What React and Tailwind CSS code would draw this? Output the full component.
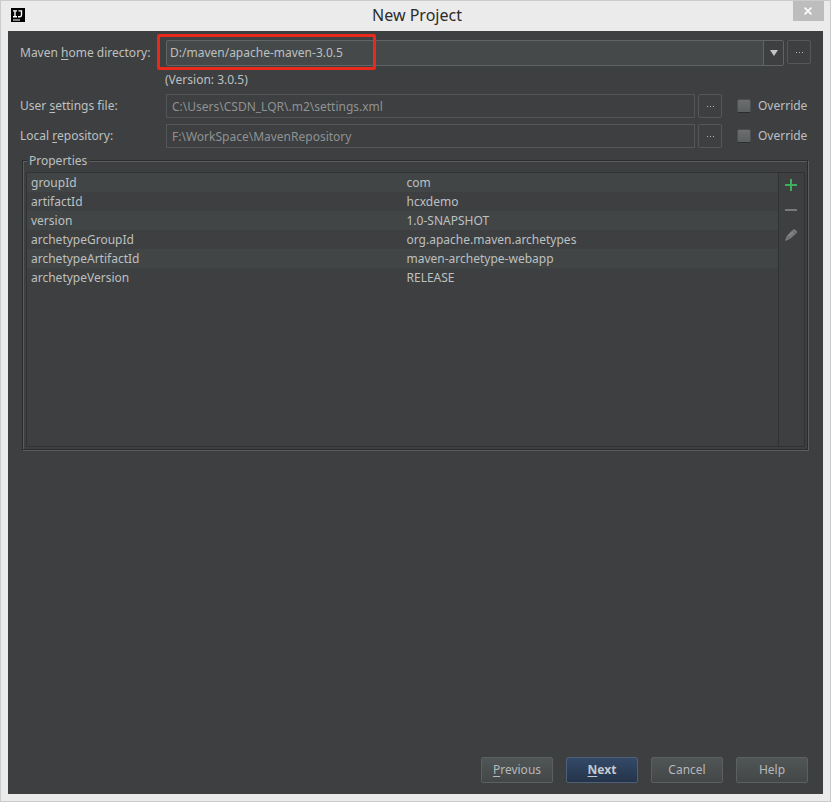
import React, { useState } from "react";

const properties = [
  { name: "groupId", value: "com" },
  { name: "artifactId", value: "hcxdemo" },
  { name: "version", value: "1.0-SNAPSHOT" },
  { name: "archetypeGroupId", value: "org.apache.maven.archetypes" },
  { name: "archetypeArtifactId", value: "maven-archetype-webapp" },
  { name: "archetypeVersion", value: "RELEASE" },
];

function Mnemonic({ children }) {
  return <span className="underline underline-offset-2">{children}</span>;
}

function BrowseButton({ label }) {
  return (
    <button
      aria-label={label}
      className="flex h-6 w-6 shrink-0 items-center justify-center rounded-xs border border-[#555758] bg-[#3d3f40]"
    >
      <svg width="7" height="1" viewBox="0 0 7 1" fill="#b4b7b8" shapeRendering="crispEdges">
        <rect x="0" y="0" width="1" height="1" />
        <rect x="3" y="0" width="1" height="1" />
        <rect x="6" y="0" width="1" height="1" />
      </svg>
    </button>
  );
}

function PathRow({ id, label, value }) {
  const [override, setOverride] = useState(false);

  return (
    <div className="flex h-6 items-center">
      <label htmlFor={id} className="w-[146px] shrink-0">{label}</label>
      <input
        id={id}
        type="text"
        readOnly
        value={value}
        className="h-6 min-w-0 flex-1 border border-[#535556] bg-[#3d3f40] px-[5px] text-[#8f9293] outline-none"
      />
      <div className="ml-[3px] flex">
        <BrowseButton label="Browse" />
      </div>
      <label className="ml-[15px] flex w-[74px] shrink-0 items-center gap-[7px]">
        <input
          type="checkbox"
          checked={override}
          onChange={(e) => setOverride(e.target.checked)}
          className="h-[14px] w-[14px] shrink-0 appearance-none rounded-xs border border-[#4c4f50] border-b-[#2c2e2f] bg-linear-to-b from-[#6c6e6f] to-[#5c5f60] checked:bg-[#9a9d9e]"
        />
        Override
      </label>
    </div>
  );
}

function DialogButton({ primary, children }) {
  return (
    <button
      className={
        primary
          ? "h-[26px] w-[72px] rounded-xs border border-[#4d6078] bg-linear-to-b from-[#344a68] to-[#24344a] font-bold text-[#c5cacf]"
          : "h-[26px] w-[72px] rounded-xs border border-[#5c6061] bg-linear-to-b from-[#505556] to-[#434748] text-[#b6b9ba]"
      }
    >
      {children}
    </button>
  );
}

function TitleBar() {
  return (
    <header className="flex h-[30px] items-start justify-between pl-[10px] pr-[6px]">
      <svg className="mt-[7px]" width="14" height="14" viewBox="0 0 14 14" aria-hidden="true">
        <rect width="14" height="14" fill="#000" />
        <g stroke="#fff" strokeWidth="1.4" fill="none">
          <path d="M2 2.9h4M4 2.9v5.4M2 8.7h4" />
          <path d="M7.5 2.9h3v4.2q0 1.6-1.6 1.6H7" />
        </g>
        <rect x="2" y="11.5" width="7" height="1" fill="#fff" />
      </svg>
      <h1 className="text-base leading-7 text-[#2b2b2b]">New Project</h1>
      <button aria-label="Close" className="-ml-4 flex h-5 w-[31px] items-center justify-center bg-[#bdbdbd]">
        <svg width="8" height="8" viewBox="0 0 8 8" stroke="#fff" strokeWidth="1.7">
          <path d="M0.6 0.6l6.8 6.8M7.4 0.6L0.6 7.4" />
        </svg>
      </button>
    </header>
  );
}

function PropertiesPanel() {
  return (
    <section className="relative ml-[2px] mr-[3px] mt-3 border border-[#2a2c2d] shadow-[inset_1px_1px_0_#5b5d5e,1px_1px_0_#5b5d5e]">
      <h2 className="absolute -top-2 left-1 bg-[#3d3f40] px-[2px] leading-4">Properties</h2>
      <div className="mb-[2px] ml-[3px] mr-[2px] mt-[11px] flex h-[275px] border border-[#303233]">
        <div className="flex-1">
          <table className="w-full table-fixed border-collapse text-left">
            <tbody>
              {properties.map((p) => (
                <tr key={p.name} className="h-[19px] odd:bg-[#414545]">
                  <td className="p-0 pl-1 leading-[19px]">{p.name}</td>
                  <td className="p-0 pl-1 leading-[19px]">{p.value}</td>
                </tr>
              ))}
            </tbody>
          </table>
        </div>
        <div className="flex w-[26px] flex-col items-center gap-[11px] border-l border-[#2f3132] pr-px pt-[5px]">
          <button aria-label="Add">
            <svg className="block" width="14" height="14" viewBox="0 0 14 14" fill="#3fae5a">
              <path d="M6 1h2v5h5v2H8v5H6V8H1V6h5z" />
            </svg>
          </button>
          <button aria-label="Remove">
            <svg className="block" width="14" height="14" viewBox="0 0 14 14" fill="#77797a">
              <rect x="1" y="6" width="12" height="2" />
            </svg>
          </button>
          <button aria-label="Edit">
            <svg className="block" width="14" height="14" viewBox="0 0 14 14">
              <path d="M1 13l1.6-5L9 1.6Q10 .8 11 1.4L12.7 3q.7 1-.2 2.2L6 11z" fill="#77797a" />
              <path d="M8.2 2.2l3.6 3.6M3.2 8l2.6 2.6" stroke="#585b5c" strokeWidth="0.8" />
              <path d="M4.2 8.4l5-5" stroke="#929495" strokeWidth="0.9" />
            </svg>
          </button>
        </div>
      </div>
    </section>
  );
}

function App() {
  return (
    <div className="flex min-h-screen flex-col border border-[#cbcbcb] bg-[#ebebeb] font-['Noto_Sans',sans-serif] text-xs leading-5 text-[#bdc0c1]">
      <TitleBar />
      <main className="mx-[7px] mb-[7px] flex flex-1 flex-col bg-[#3d3f40] px-3 pb-[11px] pt-[9px]">
        <div className="flex items-start">
          <label htmlFor="maven-home" className="w-[146px] shrink-0 whitespace-nowrap leading-[26px]">
            Maven <Mnemonic>h</Mnemonic>ome directory:
          </label>
          <div className="relative min-w-0 flex-1">
            <select
              id="maven-home"
              className="block h-[26px] w-full appearance-none rounded-xs border border-[#5f6465] bg-[#454949] px-[3px] text-[#bdc0c1] outline-none"
            >
              <option>D:/maven/apache-maven-3.0.5</option>
            </select>
            <span className="pointer-events-none absolute inset-y-px right-px flex w-5 items-center justify-center border-l border-[#5f6465] bg-[#3d3f40]">
              <svg width="8" height="6" viewBox="0 0 8 6" fill="#c3c6c7">
                <path d="M0 0h8L4 6z" />
              </svg>
            </span>
            <span className="pointer-events-none absolute -left-[9px] -top-[6px] h-9 w-[219px] rounded-xs border-3 border-[#e8291c]" />
          </div>
          <div className="ml-[3px] flex">
            <BrowseButton label="Browse for Maven home" />
          </div>
        </div>
        <p className="ml-[145px] mt-1 leading-5">(Version: 3.0.5)</p>

        <div className="mt-1 flex flex-col gap-[6px]">
          <PathRow
            id="settings-file"
            label={<>User <Mnemonic>s</Mnemonic>ettings file:</>}
            value="C:\Users\CSDN_LQR\.m2\settings.xml"
          />
          <PathRow
            id="local-repo"
            label={<>Local <Mnemonic>r</Mnemonic>epository:</>}
            value="F:\WorkSpace\MavenRepository"
          />
        </div>

        <PropertiesPanel />

        <footer className="mt-auto flex justify-end gap-[13px] pr-[3px]">
          <DialogButton><Mnemonic>P</Mnemonic>revious</DialogButton>
          <DialogButton primary><Mnemonic>N</Mnemonic>ext</DialogButton>
          <DialogButton>Cancel</DialogButton>
          <DialogButton>Help</DialogButton>
        </footer>
      </main>
    </div>
  );
}

export default App;
